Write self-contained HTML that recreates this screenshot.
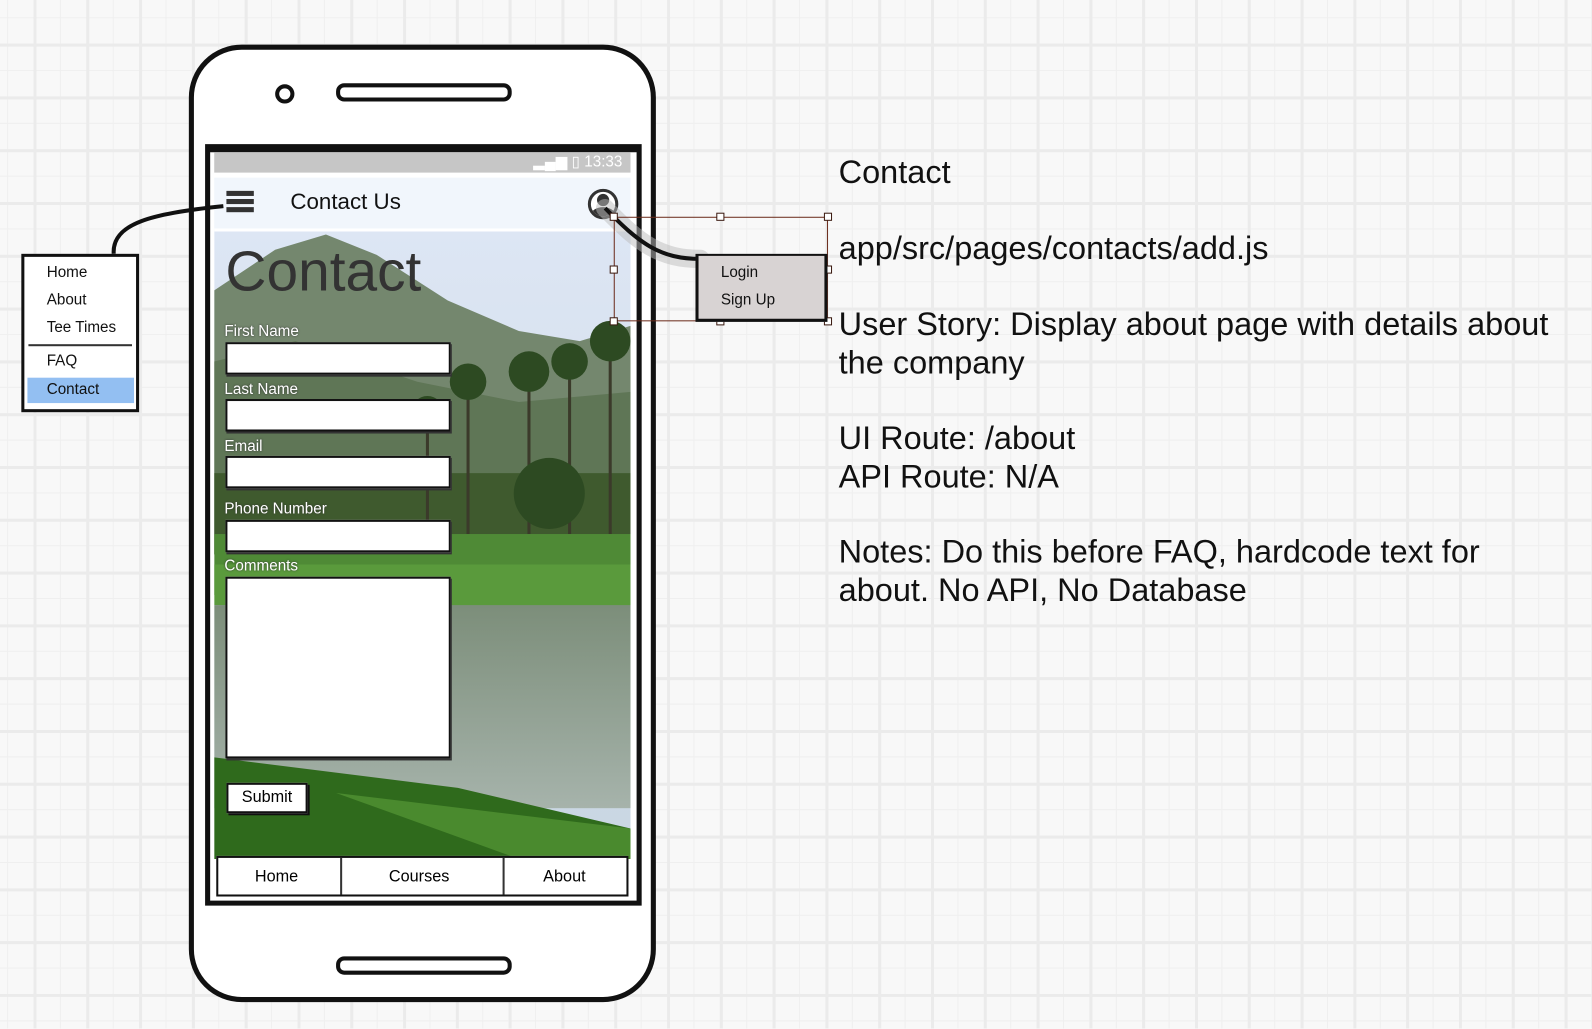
<!DOCTYPE html>
<html><head><meta charset="utf-8"><style>
body{margin:0;width:1592px;height:1028px;overflow:hidden;font-family:"Liberation Sans",sans-serif;background:#f8f8f8}
#w{position:absolute;left:0;top:0;width:1568px;height:1013px;transform:scale(1.0153);transform-origin:0 0;
background-color:#f8f8f8;
background-image:linear-gradient(90deg,#ebebeb 3px,transparent 3px),linear-gradient(#ebebeb 3px,transparent 3px),linear-gradient(90deg,#efefef 1px,transparent 1px),linear-gradient(#efefef 1px,transparent 1px);
background-size:52px 52px,52px 52px,26px 26px,26px 26px;background-position:33px 43px,33px 43px,7px 17px,7px 17px}
.a{position:absolute}
.t{position:absolute;color:#111;white-space:nowrap}
.f{position:absolute;left:222px;width:218px;background:#fff;border:2px solid #111;box-shadow:1px 2px 0 #333}
.lbl{position:absolute;left:221px;color:#fff;font-size:15px;text-shadow:0 0 2px #333}
.r{font-size:32px;color:#111}
</style></head><body><div id="w">
<div class="a" style="left:186px;top:44px;width:450px;height:933px;border:5px solid #111;border-radius:52px;background:#fff"></div>
<div class="a" style="left:271px;top:83px;width:11px;height:11px;border:4px solid #111;border-radius:50%"></div>
<div class="a" style="left:331px;top:82px;width:165px;height:10px;border:4px solid #111;border-radius:8px"></div>
<div class="a" style="left:331px;top:942px;width:165px;height:10px;border:4px solid #111;border-radius:8px"></div>
<div class="a" style="left:202px;top:142px;width:420px;height:737px;border:5px solid #111;border-top-width:8px;background:#fff"></div>
<div class="a" style="left:211px;top:150px;width:410px;height:20px;background:#c6c6c6;color:#fff;font-size:15px;text-align:right;box-sizing:border-box;padding-right:8px;line-height:20px">▂▄▆ ▯ 13:33</div>
<svg class="a" style="left:211px;top:226px" width="410" height="620">
<defs>
<linearGradient id="sky" x1="0" y1="0" x2="0" y2="1"><stop offset="0" stop-color="#dde6f4"/><stop offset="1" stop-color="#c9d6e2"/></linearGradient>
<linearGradient id="lake" x1="0" y1="0" x2="0" y2="1"><stop offset="0" stop-color="#7c8e7a"/><stop offset="1" stop-color="#a6b3ab"/></linearGradient>
</defs>
<rect width="410" height="620" fill="url(#sky)"/>
<path d="M0 60 L60 20 L110 5 L160 25 L230 70 L300 100 L360 110 L410 95 L410 320 L0 320Z" fill="#74876e"/>
<path d="M0 130 L80 110 L200 150 L300 170 L410 160 L410 320 L0 320Z" fill="#5f7656"/>
<rect y="240" width="410" height="80" fill="#3f5a2e"/>
<rect y="300" width="410" height="60" fill="#4f8a36"/>
<path d="M0 330 L410 330 L410 380 L0 370Z" fill="#5a9a3c"/>
<rect y="370" width="410" height="200" fill="url(#lake)"/>
<path d="M0 520 L0 620 L410 620 L410 590 L240 550 Z" fill="#2f6a1c"/>
<path d="M120 555 L410 590 L410 620 L300 620 Z" fill="#4a8a2e"/>
<g stroke="#3b3a2a" stroke-width="3"><line x1="250" y1="150" x2="250" y2="300"/><line x1="310" y1="140" x2="310" y2="300"/><line x1="350" y1="130" x2="350" y2="300"/><line x1="390" y1="110" x2="390" y2="300"/><line x1="210" y1="180" x2="210" y2="300"/></g>
<g fill="#2d4a22"><circle cx="250" cy="150" r="18"/><circle cx="310" cy="140" r="20"/><circle cx="350" cy="130" r="18"/><circle cx="390" cy="110" r="20"/><circle cx="210" cy="180" r="16"/><circle cx="330" cy="260" r="35"/></g>
</svg>
<div class="a" style="left:211px;top:175px;width:410px;height:50px;background:rgba(240,245,252,.92);border-bottom:3px solid #fff"></div>
<div class="a" style="left:223px;top:188px;width:27px;height:5px;background:#333;box-shadow:0 8px 0 #333,0 16px 0 #333"></div>
<div class="t" style="left:286px;top:186px;font-size:22px">Contact Us</div>
<div class="a" style="left:579px;top:186px;width:24px;height:24px;border:3px solid #333;border-radius:50%;overflow:hidden;background:#fff"><div class="a" style="left:6px;top:2px;width:12px;height:12px;background:#333;border-radius:50%"></div><div class="a" style="left:0;top:15px;width:24px;height:16px;background:#333;border-radius:50%"></div></div>
<div class="t" style="left:222px;top:234px;font-size:56px;color:#333">Contact</div>
<div class="lbl" style="top:318px">First Name</div><div class="f" style="top:337px;height:28px"></div>
<div class="lbl" style="top:375px">Last Name</div><div class="f" style="top:393px;height:28px"></div>
<div class="lbl" style="top:431px">Email</div><div class="f" style="top:449px;height:28px"></div>
<div class="lbl" style="top:493px">Phone Number</div><div class="f" style="top:512px;height:28px"></div>
<div class="lbl" style="top:549px">Comments</div><div class="f" style="top:568px;height:175px"></div>
<div class="a" style="left:223px;top:771px;width:76px;height:26px;background:#fff;border:2px solid #111;box-shadow:2px 2px 0 #111;font-size:16px;text-align:center;line-height:26px">Submit</div>
<div class="a" style="left:213px;top:843px;width:402px;height:36px;background:#fff;border:2px solid #111;font-size:16px;line-height:38px">
<span class="a" style="left:36px">Home</span><span class="a" style="left:120px;top:0;height:36px;border-left:2px solid #333"></span><span class="a" style="left:168px">Courses</span><span class="a" style="left:280px;top:0;height:36px;border-left:2px solid #333"></span><span class="a" style="left:320px">About</span></div>
<svg class="a" style="left:0;top:0" width="820" height="400"><path d="M220 203 C150 210 110 220 112 250" stroke="#111" stroke-width="4" fill="none"/>
<path d="M596 205 C630 240 650 255 690 255" stroke="#bbb" stroke-width="18" fill="none" opacity=".5" stroke-linecap="round"/>
<path d="M596 205 C630 240 650 255 690 255" stroke="#111" stroke-width="4" fill="none"/>
<rect x="605" y="214" width="210" height="102" fill="none" stroke="#6b2b1b" stroke-width="1"/>
<g fill="#fff" stroke="#3a1a10"><rect x="601" y="210" width="7" height="7"/><rect x="706" y="210" width="7" height="7"/><rect x="812" y="210" width="7" height="7"/><rect x="601" y="262" width="7" height="7"/><rect x="812" y="262" width="7" height="7"/><rect x="601" y="313" width="7" height="7"/><rect x="706" y="313" width="7" height="7"/><rect x="812" y="313" width="7" height="7"/></g></svg>
<div class="a" style="left:21px;top:250px;width:110px;height:150px;background:#fff;border:3px solid #111"></div>
<div class="t" style="left:46px;top:260px;font-size:15px">Home</div>
<div class="t" style="left:46px;top:287px;font-size:15px">About</div>
<div class="t" style="left:46px;top:314px;font-size:15px">Tee Times</div>
<div class="a" style="left:28px;top:339px;width:102px;height:2px;background:#333"></div>
<div class="t" style="left:46px;top:347px;font-size:15px">FAQ</div>
<div class="a" style="left:27px;top:372px;width:105px;height:25px;background:#93bff2"></div>
<div class="t" style="left:46px;top:375px;font-size:15px">Contact</div>
<div class="a" style="left:685px;top:250px;width:124px;height:62px;background:#d8d3d3;border:3px solid #111;border-top-width:2px"></div>
<div class="t" style="left:710px;top:260px;font-size:15px">Login</div>
<div class="t" style="left:710px;top:287px;font-size:15px">Sign Up</div>
<div class="t r" style="left:826px;top:151px">Contact</div>
<div class="t r" style="left:826px;top:226px">app/src/pages/contacts/add.js</div>
<div class="t r" style="left:826px;top:300px;line-height:38px">User Story: Display about page with details about<br>the company</div>
<div class="t r" style="left:826px;top:412px;line-height:38px">UI Route: /about<br>API Route: N/A</div>
<div class="t r" style="left:826px;top:524px;line-height:38px">Notes: Do this before FAQ, hardcode text for<br>about. No API, No Database</div>
</div></body></html>
